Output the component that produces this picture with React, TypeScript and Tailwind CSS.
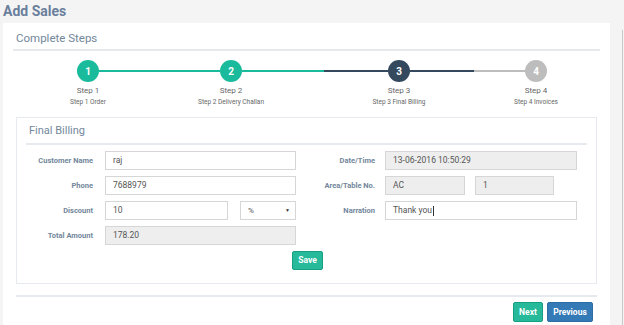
const font = { fontFamily: "Roboto, 'Liberation Sans', sans-serif" };

const steps = [
  { n: 1, title: "Step 1", sub: "Step 1 Order" },
  { n: 2, title: "Step 2", sub: "Step 2 Delivery Challan" },
  { n: 3, title: "Step 3", sub: "Step 3 Final Billing" },
  { n: 4, title: "Step 4", sub: "Step 4 Invoices" },
];

function Circle({ n, color }: { n: number; color: string }) {
  return (
    <div
      className={`w-[22px] h-[22px] shrink-0 rounded-full flex items-center justify-center text-white text-[10px] font-bold ${color}`}
    >
      {n}
    </div>
  );
}

function Label({ children, w }: { children: React.ReactNode; w: string }) {
  return (
    <div className={`${w} shrink-0 text-right text-[7.5px] font-bold text-[#73879c]`}>
      {children}
    </div>
  );
}

function Field({
  value,
  w,
  readOnly,
  caret,
}: {
  value: string;
  w: string;
  readOnly?: boolean;
  caret?: boolean;
}) {
  return (
    <div
      className={`${w} h-[19px] shrink-0 border border-[#d6d6d6] flex items-center pl-[7px] text-[8.5px] text-[#555] ${
        readOnly ? "bg-[#eeeeee]" : "bg-white"
      }`}
    >
      {value}
      {caret && <span className="w-px h-[10px] bg-[#333] ml-px" />}
    </div>
  );
}

export default function App() {
  return (
    <div className="w-[624px] h-[325px] overflow-hidden bg-[#f4f4f4] relative" style={font}>
      {/* scrollbar */}
      <div className="absolute right-[1px] top-[30px] w-px h-[295px] bg-[#c8c8c8]" />

      <h1 className="pl-[3px] pt-[1px] h-[23px] text-[14px] font-bold text-[#6a7f9c] leading-[20px]">
        Add Sales
      </h1>

      <div className="ml-[3px] w-[607px] bg-white px-[10px] pt-[7px] h-[310px]">
        <div className="border-b-2 border-[#e6e9ed] pl-[3px] pt-px h-[21px] text-[11.5px] text-[#73879c] leading-[14px]">
          Complete Steps
        </div>

        {/* wizard */}
        <div className="flex items-center mt-[9px] pl-[64px]">
          <Circle n={1} color="bg-[#1abb9c]" />
          <div className="w-[121px] h-[2px] bg-[#1abb9c]" />
          <Circle n={2} color="bg-[#1abb9c]" />
          <div className="w-[82px] h-[2px] bg-[#1abb9c]" />
          <div className="w-[64px] h-[2px] bg-[#34495e]" />
          <Circle n={3} color="bg-[#34495e]" />
          <div className="w-[64px] h-[2px] bg-[#34495e]" />
          <div className="w-[51px] h-[2px] bg-[#bdbdbd]" />
          <Circle n={4} color="bg-[#bdbdbd]" />
        </div>
        <div className="flex pl-[25px] mt-[3px] text-[#666]">
          {steps.map((s, i) => (
            <div
              key={s.n}
              className={`w-[100px] shrink-0 flex flex-col items-center ${
                i === 1 ? "ml-[43px]" : i === 2 ? "ml-[68px]" : i === 3 ? "ml-[37px]" : ""
              }`}
            >
              <div className="text-[8px] leading-[11px]">{s.title}</div>
              <div className="text-[6.5px] leading-[10px] mt-px">{s.sub}</div>
            </div>
          ))}
        </div>

        {/* Final Billing panel */}
        <div className="mx-[3px] mt-[10px] border border-[#e6e9ed] h-[167px] px-[9px]">
          <div className="border-b-2 border-[#e6e9ed] pl-[3px] pt-[6px] h-[27px] text-[11px] text-[#73879c] leading-[14px]">
            Final Billing
          </div>

          <div className="-mx-[9px] mt-[6px] flex flex-col gap-[6px]">
            <div className="flex items-center">
              <Label w="w-[76px]">Customer Name</Label>
              <div className="w-[12px]" />
              <Field value="raj" w="w-[191px]" />
              <Label w="w-[79px]">Date/Time</Label>
              <div className="w-[10px]" />
              <Field value="13-06-2016 10:50:29" w="w-[192px]" readOnly />
            </div>
            <div className="flex items-center">
              <Label w="w-[76px]">Phone</Label>
              <div className="w-[12px]" />
              <Field value="7688979" w="w-[191px]" />
              <Label w="w-[79px]">Area/Table No.</Label>
              <div className="w-[10px]" />
              <Field value="AC" w="w-[80px]" readOnly />
              <div className="w-[10px]" />
              <Field value="1" w="w-[79px]" readOnly />
            </div>
            <div className="flex items-center">
              <Label w="w-[76px]">Discount</Label>
              <div className="w-[12px]" />
              <Field value="10" w="w-[123px]" />
              <div className="w-[12px]" />
              <div className="w-[56px] h-[19px] shrink-0 border border-[#d6d6d6] flex items-center justify-between pl-[7px] pr-[5px] text-[8px] text-[#555]">
                <span>%</span>
                <span className="text-[5px] text-[#333]">▼</span>
              </div>
              <Label w="w-[79px]">Narration</Label>
              <div className="w-[10px]" />
              <Field value="Thank you" w="w-[192px]" caret />
            </div>
            <div className="flex items-center">
              <Label w="w-[76px]">Total Amount</Label>
              <div className="w-[12px]" />
              <Field value="178.20" w="w-[191px]" readOnly />
            </div>
          </div>

          <div className="flex justify-center mt-[6px] pl-[2px]">
            <button className="w-[31px] h-[19px] rounded-[2px] bg-[#26b99a] border border-[#169f85] text-white text-[8.5px] font-bold">
              Save
            </button>
          </div>
        </div>

        {/* footer */}
        <div className="mx-[3px] mt-[11px] border-t-2 border-[#e6e9ed] pt-[5px] flex justify-end gap-[4px] pr-[4px]">
          <button className="w-[30px] h-[20px] rounded-[2px] bg-[#26b99a] border border-[#169f85] text-white text-[8.5px] font-bold">
            Next
          </button>
          <button className="w-[46px] h-[20px] rounded-[2px] bg-[#337ab7] border border-[#2e6da4] text-white text-[8.5px] font-bold">
            Previous
          </button>
        </div>
      </div>
    </div>
  );
}
